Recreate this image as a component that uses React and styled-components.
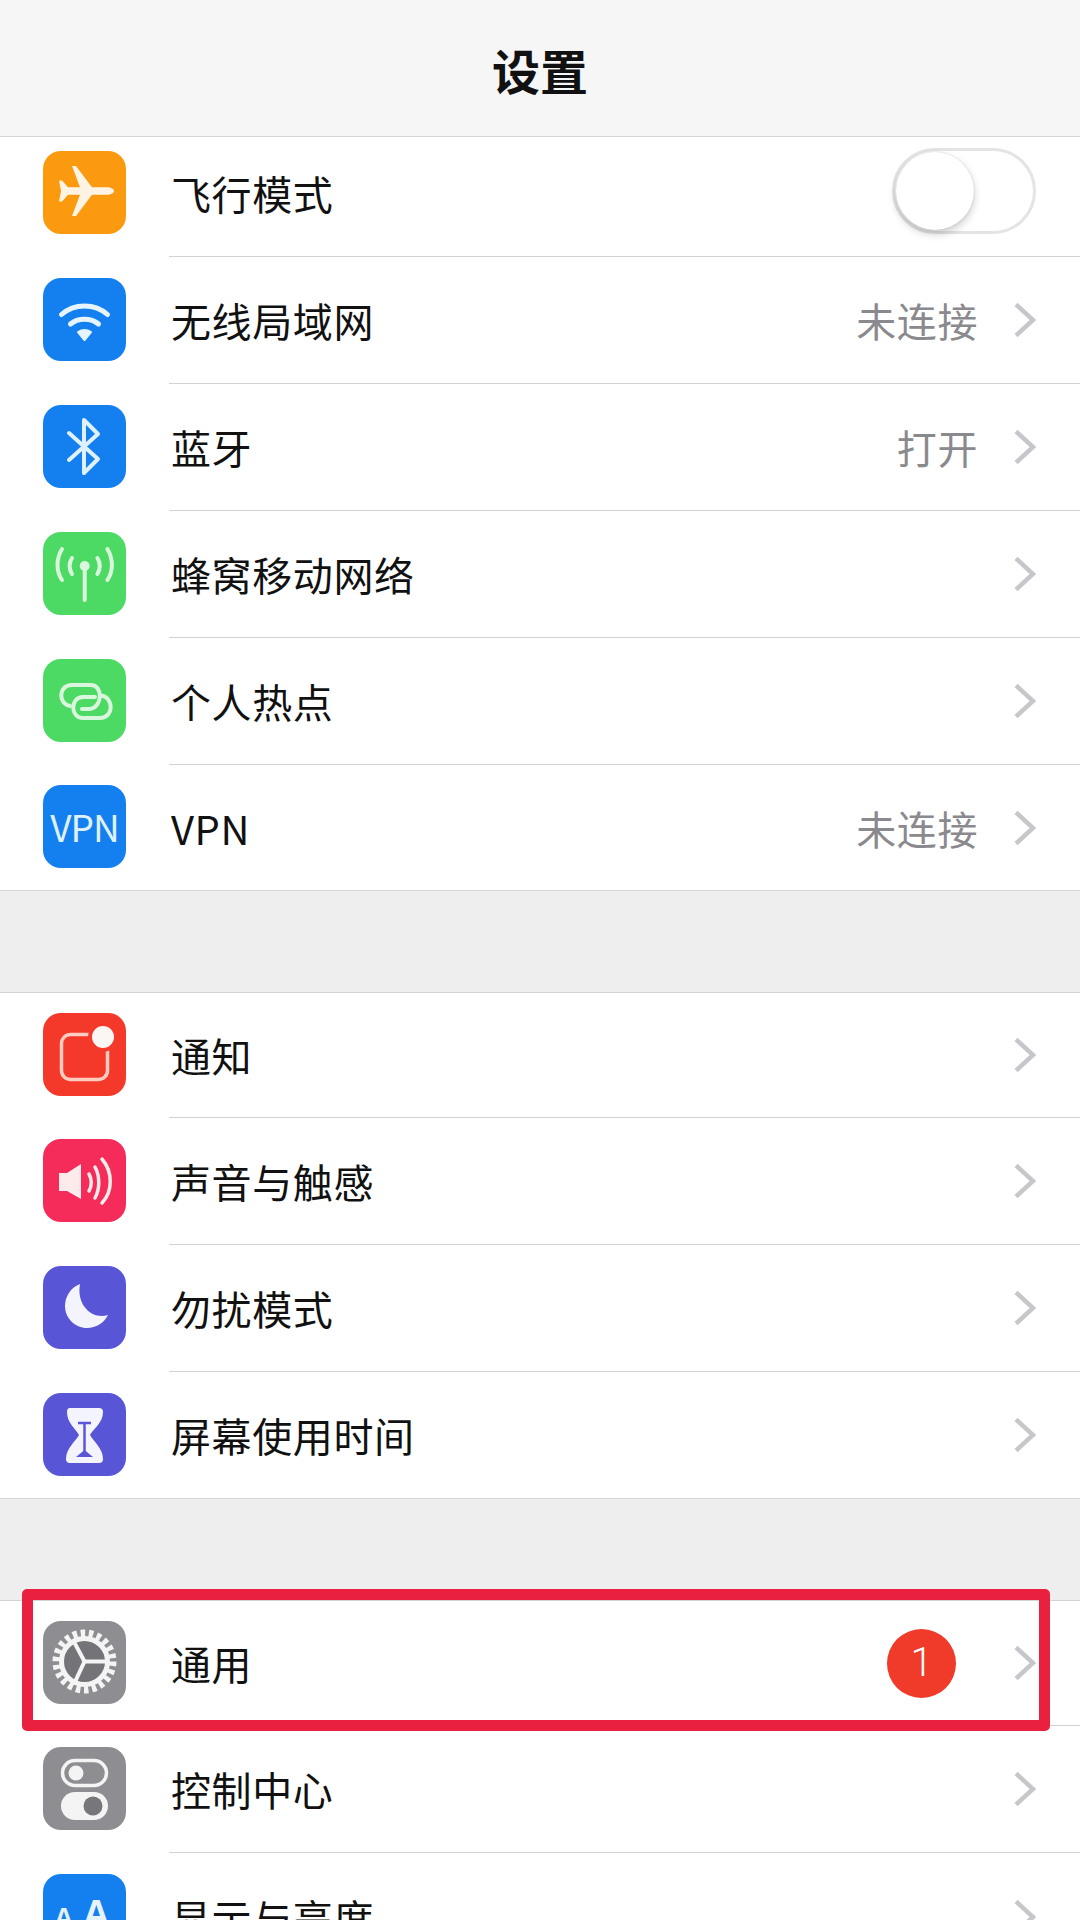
import React from 'react';
import styled, { createGlobalStyle } from 'styled-components';

const GlobalStyle = createGlobalStyle`
	html, body {
		margin: 0;
		padding: 0;
		background: #eeeeef;
	}
	* {
		box-sizing: border-box;
	}
`;

const Page = styled.div`
	width: 1080px;
	height: 1920px;
	overflow: hidden;
	background: #eeeeef;
	font-family: "Noto Sans CJK SC", "Noto Sans", sans-serif;
	color: #111;
`;

const Header = styled.header`
	position: relative;
	z-index: 2;
	height: 137px;
	display: flex;
	align-items: center;
	justify-content: center;
	background: #f6f6f6;
	border-bottom: 1px solid #d6d6d8;
`;

const Title = styled.h1`
	margin: 1px 0 0;
	font-size: 48px;
	font-weight: 700;
	color: #111;
`;

const Group = styled.section`
	margin-top: ${props => props.$top}px;
	background: #fff;
	border-top: ${props => props.$flush ? 'none' : '1px solid #d4d4d6'};
	border-bottom: 1px solid #d4d4d6;

	& > :first-child {
		height: ${props => props.$lead}px;
	}
	& > :last-child {
		height: ${props => props.$tail}px;
	}
	& > :last-child > div:last-child {
		border-bottom: none;
	}
`;

const Row = styled.div`
	position: relative;
	height: 127px;
	display: flex;
	align-items: stretch;
	padding-left: 43px;
`;

const IconTile = styled.div`
	flex: none;
	align-self: center;
	width: 83px;
	height: 83px;
	margin-top: -2px;
	border-radius: 18px;
	background: ${props => props.$bg};
	color: #fff;
	display: flex;
	align-items: center;
	justify-content: center;
	overflow: hidden;

	svg {
		display: block;
		width: 83px;
		height: 83px;
	}
`;

const RowBody = styled.div`
	flex: 1;
	margin-left: 43px;
	padding-right: 44px;
	display: flex;
	align-items: center;
	border-bottom: 1px solid #d2d2d4;
`;

const Label = styled.span`
	flex: 1;
	margin-left: 2px;
	font-size: 40px;
	line-height: 48px;
	letter-spacing: 0.6px;
	color: #111;
`;

const Value = styled.span`
	margin-right: 35px;
	font-size: 40px;
	line-height: 48px;
	letter-spacing: 0.6px;
	color: #8a8a8e;
`;

const Badge = styled.span`
	width: 69px;
	height: 69px;
	margin-right: 57px;
	border-radius: 50%;
	background: #f03a2a;
	color: #fff;
	font-family: Roboto, sans-serif;
	font-size: 40px;
	font-weight: 300;
	line-height: 1;
	display: flex;
	align-items: center;
	justify-content: center;
`;

const Chevron = styled.svg`
	flex: none;
	display: block;
	width: 23px;
	height: 36px;
`;

const Track = styled.div`
	width: 144px;
	height: 86px;
	margin-top: -5px;
	padding: 1px;
	border: 3px solid #e4e4e6;
	border-radius: 43px;
	background: #fff;
	display: flex;
	align-items: center;
`;

const Knob = styled.div`
	width: 78px;
	height: 78px;
	border-radius: 50%;
	background: #fff;
	box-shadow: 0 4px 9px rgba(0, 0, 0, 0.2), 0 0 2px rgba(0, 0, 0, 0.16);
`;

const Highlight = styled.div`
	position: absolute;
	top: -12px;
	left: 22px;
	width: 1028px;
	height: 142px;
	border: 11px solid #e9203f;
	border-radius: 5px;
	pointer-events: none;
`;

const VpnText = styled.span`
	font-size: 37px;
	font-weight: 400;
	line-height: 1;
	color: #dff1ff;
	letter-spacing: -1px;
`;

const LetterPair = styled.div`
	display: flex;
	align-items: baseline;
	justify-content: flex-end;
	align-self: flex-end;
	gap: 9px;
	padding: 0 16px 24px 0;
	width: 83px;
	font-family: "Liberation Sans", sans-serif;
	font-weight: 700;
	color: #e6f3ff;
`;

const Letter = styled.span`
	font-size: ${props => props.$size}px;
	line-height: 1;
`;

const Arrow = () => (
	<Chevron viewBox="0 0 23 36" fill="none" stroke="#c7c7cb" strokeWidth="4.5">
		<polyline points="3,2.5 20,18 3,33.5" />
	</Chevron>
);

const Drawing = ({ children }) => (
	<svg viewBox="0 0 83 83" fill="none" stroke="#fff" strokeLinecap="round" strokeLinejoin="round">
		{children}
	</svg>
);

const AirplaneIcon = () => (
	<Drawing>
		<path
			fill="#fff4e4"
			stroke="none"
			d="M71 40c0-2-3-3.800-7-3.800H49L33 15h-4l8 21.200H25L19 29.500h-3l2 10.500-2 10.500h3l6-6.700h12L29 65h4l16-21.200h15c4 0 7-1.800 7-3.800z"
		/>
	</Drawing>
);

const WifiIcon = () => (
	<Drawing>
		<g stroke="#e6f4ff" strokeWidth="5">
			<path d="M18.500 36.500C31 25 52 25 64.500 36.500" />
			<path d="M27.500 46C35 39.500 48 39.500 55.500 46" />
		</g>
		<path fill="#e6f4ff" stroke="#e6f4ff" strokeWidth="2" d="M35 54c4-2.500 9-2.500 13 0l-6.500 8z" />
	</Drawing>
);

const BluetoothIcon = () => (
	<Drawing>
		<polyline stroke="#dff1ff" strokeWidth="4" points="26,28 55,54 41,68 41,15 55,29 26,55" />
	</Drawing>
);

const CellularIcon = () => (
	<Drawing>
		<g stroke="#d9f7dc" strokeWidth="4">
			<path d="M19 17C13 27 13 39 19 48" />
			<path d="M29 26C26 31 26 37 29 42" />
			<path d="M64.400 17C70.400 27 70.400 39 64.400 48" />
			<path d="M54.400 26C57.400 31 57.400 37 54.400 42" />
			<path d="M41.700 36V68" />
		</g>
		<circle cx="41.700" cy="34" r="5" fill="#d9f7dc" stroke="none" />
	</Drawing>
);

const HotspotIcon = () => (
	<Drawing>
		<g stroke="#d9f7dc" strokeWidth="4">
			<path d="M27 47C15 45 15 26 29 26H48C60 26 60 48 47 50H39" />
			<path d="M52 38H40C27 38 27 59 40 59H57C71 59 71 38 58 36.500" />
		</g>
	</Drawing>
);

const NotifyIcon = () => (
	<Drawing>
		<rect x="18.500" y="21.500" width="46" height="45" rx="9" stroke="#ffccbf" strokeWidth="3.500" />
		<circle cx="60" cy="24" r="15" fill="#f4392b" stroke="none" />
		<circle cx="60" cy="24" r="11" fill="#fbf6f3" stroke="none" />
	</Drawing>
);

const SoundIcon = () => (
	<Drawing>
		<path fill="#fdeaea" stroke="none" d="M16 34h8l14-9v35l-14-8h-8z" />
		<g stroke="#fdeaea" strokeWidth="3.500">
			<path d="M46 35C49 40 49 47 46 52" />
			<path d="M52 28C57 37 57 50 52 59" />
			<path d="M59 20C70 33 70 52 59 64" />
		</g>
	</Drawing>
);

const MoonIcon = () => (
	<Drawing>
		<path fill="#f4f4ff" stroke="none" d="M37 18C27 22 22 31 22 40C22 52 32 62 44 62C53 62 61 57 65 49C50 54 33 40 37 18Z" />
	</Drawing>
);

const HourglassIcon = () => (
	<Drawing>
		<path
			fill="#f4f4ff"
			stroke="none"
			d="M27 15H56Q60 15 60 19C60 30 50 36 47 42C50 48 60 55 60 66Q60 70 56 70H27Q23 70 23 66C23 55 33 48 36 42C33 36 24 30 24 19Q24 15 27 15Z"
		/>
		<g stroke="#5b56d8" strokeWidth="2.500" strokeLinecap="butt">
			<path d="M35 30H48" />
			<path d="M41.500 30V60" />
		</g>
		<path fill="#5b56d8" stroke="none" d="M33 64H50L41.500 57Z" />
	</Drawing>
);

const GearIcon = () => {
	const spokes = [-118, 0, 115].map(angle => {
		const rad = (angle * Math.PI) / 180;
		return { angle, x: 41.5 + 22 * Math.cos(rad), y: 40.5 + 22 * Math.sin(rad) };
	});
	return (
		<Drawing>
			<circle cx="41.500" cy="40.500" r="22" fill="#747378" stroke="none" />
			<circle cx="41.500" cy="40.500" r="28" stroke="#f4f4f4" strokeWidth="8" strokeLinecap="butt" strokeDasharray="4.400 3.600" />
			<circle cx="41.500" cy="40.500" r="23" stroke="#f4f4f4" strokeWidth="5" />
			{spokes.map(spoke => (
				<line key={spoke.angle} x1="41.500" y1="40.500" x2={spoke.x} y2={spoke.y} stroke="#f4f4f4" strokeWidth="4" />
			))}
		</Drawing>
	);
};

const ControlIcon = () => (
	<Drawing>
		<rect x="19.500" y="13.500" width="44" height="25" rx="12.500" stroke="#f4f4f4" strokeWidth="3.500" />
		<circle cx="33" cy="26" r="7.500" fill="#f4f4f4" stroke="none" />
		<rect x="18" y="45" width="47" height="28" rx="14" fill="#f4f4f4" stroke="none" />
		<circle cx="50" cy="59" r="9.500" fill="#77777b" stroke="none" />
	</Drawing>
);

const TextSizeIcon = () => (
	<LetterPair>
		<Letter $size={27}>A</Letter>
		<Letter $size={38}>A</Letter>
	</LetterPair>
);

const BLUE = '#1480f0';
const GREEN = '#4cd964';
const PURPLE = '#5856d6';
const GREY = '#8e8e92';

const groups = [
	{
		top: -7,
		lead: 127,
		tail: 125,
		flush: true,
		rows: [
			{ label: '飞行模式', bg: '#fb9a0e', icon: <AirplaneIcon />, toggle: true },
			{ label: '无线局域网', bg: BLUE, icon: <WifiIcon />, value: '未连接' },
			{ label: '蓝牙', bg: BLUE, icon: <BluetoothIcon />, value: '打开' },
			{ label: '蜂窝移动网络', bg: GREEN, icon: <CellularIcon /> },
			{ label: '个人热点', bg: GREEN, icon: <HotspotIcon /> },
			{ label: 'VPN', bg: BLUE, icon: <VpnText>VPN</VpnText>, value: '未连接' },
		],
	},
	{
		top: 101,
		lead: 125,
		tail: 126,
		rows: [
			{ label: '通知', bg: '#f4392b', icon: <NotifyIcon /> },
			{ label: '声音与触感', bg: '#f52b5a', icon: <SoundIcon /> },
			{ label: '勿扰模式', bg: PURPLE, icon: <MoonIcon /> },
			{ label: '屏幕使用时间', bg: PURPLE, icon: <HourglassIcon /> },
		],
	},
	{
		top: 101,
		lead: 125,
		tail: 127,
		rows: [
			{ label: '通用', bg: GREY, icon: <GearIcon />, badge: '1', marked: true },
			{ label: '控制中心', bg: GREY, icon: <ControlIcon /> },
			{ label: '显示与亮度', bg: BLUE, icon: <TextSizeIcon /> },
		],
	},
];

const SettingsRow = ({ row }) => (
	<Row>
		<IconTile $bg={row.bg}>{row.icon}</IconTile>
		<RowBody>
			<Label>{row.label}</Label>
			{row.value && <Value>{row.value}</Value>}
			{row.badge && <Badge>{row.badge}</Badge>}
			{row.toggle ? (
				<Track>
					<Knob />
				</Track>
			) : (
				<Arrow />
			)}
		</RowBody>
		{row.marked && <Highlight />}
	</Row>
);

const App = () => (
	<Page>
		<GlobalStyle />
		<Header>
			<Title>设置</Title>
		</Header>
		{groups.map(group => (
			<Group
				key={group.rows[0].label}
				$top={group.top}
				$lead={group.lead}
				$tail={group.tail}
				$flush={group.flush}
			>
				{group.rows.map(row => (
					<SettingsRow key={row.label} row={row} />
				))}
			</Group>
		))}
	</Page>
);

export default App;
